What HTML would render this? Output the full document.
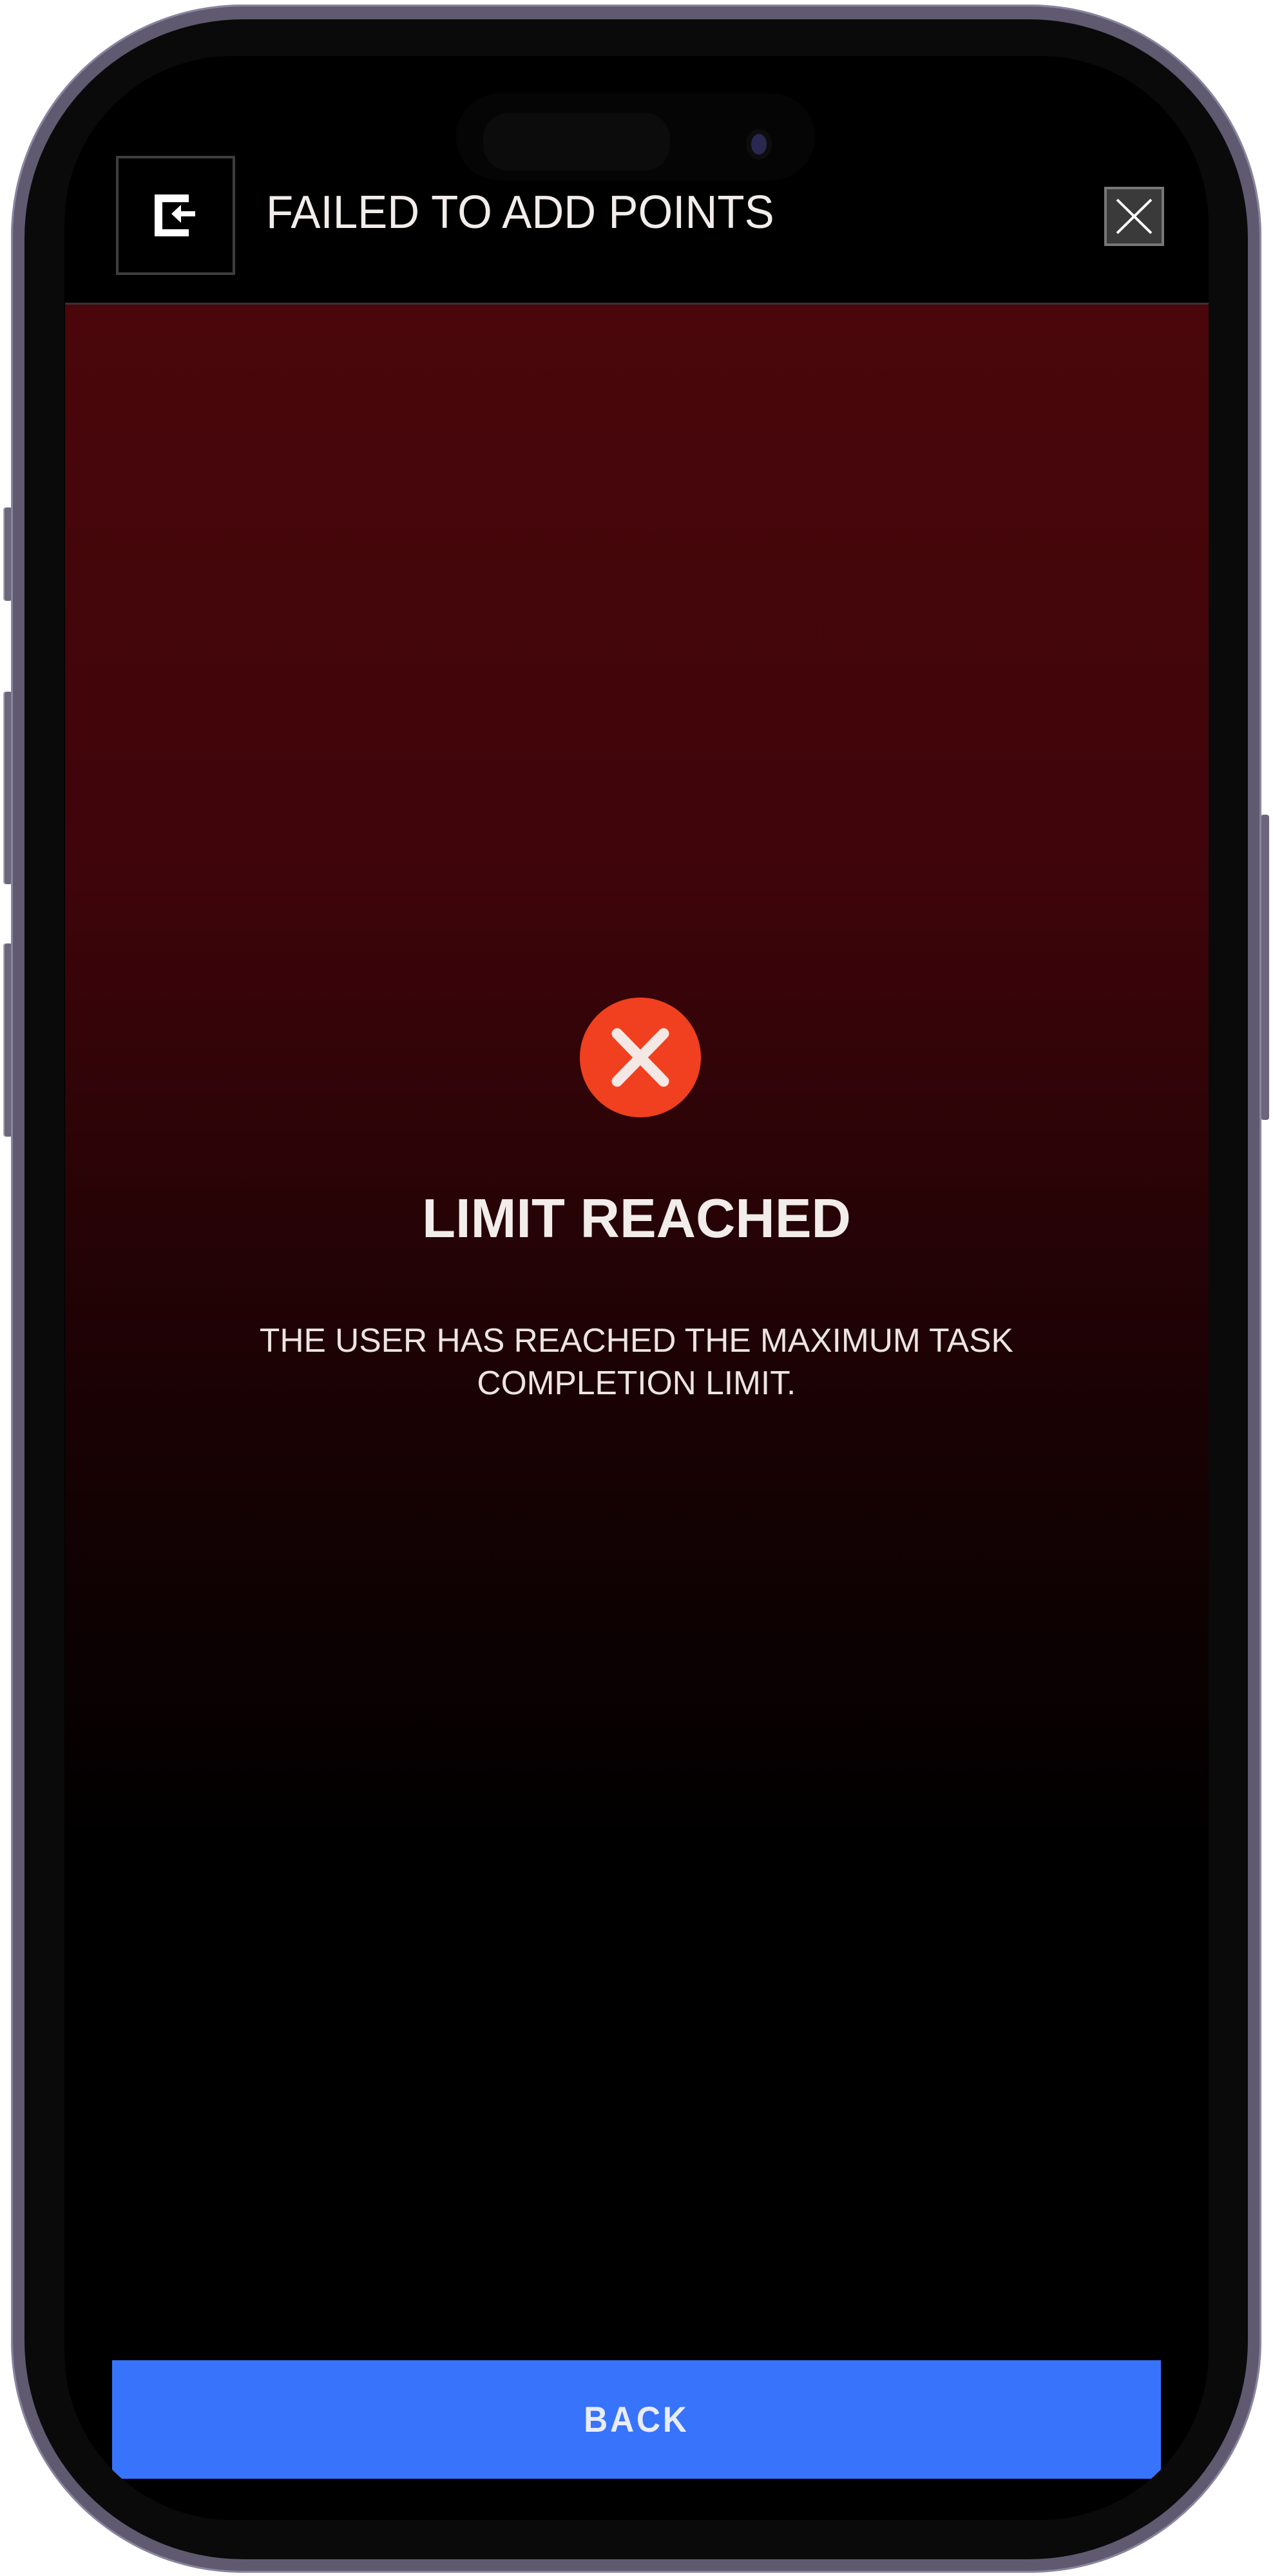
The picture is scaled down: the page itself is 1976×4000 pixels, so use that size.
<!DOCTYPE html>
<html><head><meta charset="utf-8"><style>
html,body{margin:0;padding:0;background:#fff;width:1976px;height:4000px;overflow:hidden;position:relative;font-family:"Liberation Sans",sans-serif}
.abs{position:absolute}
.frame{left:17px;top:7px;width:1941px;height:3988px;border-radius:360px;background:#5f5a70;box-shadow:inset 0 0 0 3px #8a85a0}
.bezel{left:38px;top:30px;width:1899px;height:3944px;border-radius:340px;background:#0a0a0a}
.screen{left:100px;top:87px;width:1776px;height:3826px;border-radius:260px;background:#000;overflow:hidden}
.btn{background:#6b667c;border-radius:4px;box-shadow:inset 2px 0 0 #aaa}
.red{left:1px;top:383px;width:1775px;height:3000px;background:linear-gradient(#4a060b 0px,#3e050a 900px,#1a0204 1700px,#000 2400px);border-top:3px solid #3a3032}
.t{color:#f2ecea;white-space:nowrap;transform-origin:0 0}
</style></head><body>
<div class="abs btn" style="left:5px;top:788px;width:14px;height:145px"></div>
<div class="abs btn" style="left:5px;top:1074px;width:14px;height:299px"></div>
<div class="abs btn" style="left:5px;top:1465px;width:14px;height:300px"></div>
<div class="abs btn" style="left:1956px;top:1265px;width:14px;height:474px"></div>
<div class="abs frame"></div>
<div class="abs bezel"></div>
<div class="abs screen">
  <div class="abs red"></div>
  <div class="abs t" style="left:313px;top:207px;font-size:72px;line-height:72px;transform:scaleX(0.96)">FAILED TO ADD POINTS</div>
  <div class="abs" style="left:80px;top:155px;width:177px;height:177px;border:4px solid #3e3e3e"></div>
  <svg class="abs" style="left:135px;top:210px" width="70" height="70" viewBox="0 0 70 70">
    <path d="M58 11H11V65H58" fill="none" stroke="#fff" stroke-width="12"/>
    <path d="M33 45L48 31V41H70V49H48V59Z" fill="#fff" transform="translate(-2,-10)"/>
  </svg>
  <div class="abs" style="left:1614px;top:203px;width:85px;height:84px;background:#3a3a3a;border:4px solid #777"></div>
  <svg class="abs" style="left:1614px;top:203px" width="93" height="92"><path d="M20 20L73 72M73 20L20 72" stroke="#fff" stroke-width="4"/></svg>
  <div class="abs" style="left:800px;top:1462px;width:188px;height:186px;border-radius:50%;background:#f1401f"></div>
  <svg class="abs" style="left:800px;top:1462px" width="188" height="186"><path d="M58 56L130 130M130 56L58 130" stroke="#f3e8e4" stroke-width="17" stroke-linecap="round"/></svg>
  <div class="abs t" style="left:0;width:1776px;text-align:center;top:1763px;font-size:85px;line-height:85px;font-weight:bold;"><span style="display:inline-block;transform:scaleX(1.0);transform-origin:50% 0">LIMIT REACHED</span></div>
  <div class="abs t" style="left:0;width:1776px;text-align:center;top:1962px;font-size:52px;line-height:66px;color:#ece4e2"><span style="display:inline-block;transform:scaleX(0.99);transform-origin:50% 0">THE USER HAS REACHED THE MAXIMUM TASK<br>COMPLETION LIMIT.</span></div>
  <div class="abs" style="left:74px;top:3578px;width:1628px;height:184px;background:#3873fc;border-radius:0 0 10px 10px"></div>
  <div class="abs t" style="left:74px;width:1628px;text-align:center;top:3642px;font-size:56px;line-height:56px;color:#e8ecf8;letter-spacing:4px;font-weight:bold"><span style="display:inline-block;transform:scaleX(0.92);transform-origin:50% 0">BACK</span></div>
</div>
<div class="abs" style="left:708px;top:145px;width:557px;height:135px;border-radius:68px;background:#050505"></div>
<div class="abs" style="left:750px;top:175px;width:290px;height:90px;border-radius:40px;background:#0c0c0c"></div>
<div class="abs" style="left:1166px;top:208px;width:24px;height:32px;border-radius:50%;background:#2a2850;box-shadow:0 0 0 8px #0d0d0d"></div>
</body></html>
